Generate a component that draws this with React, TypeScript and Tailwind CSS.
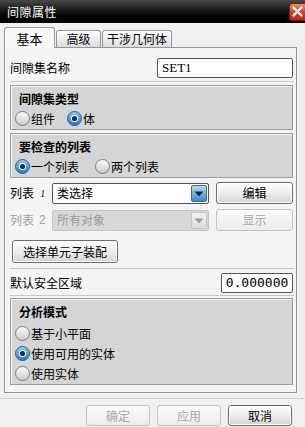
import React from 'react';

const Radio = ({ checked }: { checked?: boolean }) => (
  <svg width="15" height="15" viewBox="0 0 15 15" className="shrink-0">
    <defs>
      <linearGradient id="ru" x1="0" y1="0" x2="0" y2="1">
        <stop offset="0" stopColor="#ffffff" />
        <stop offset="1" stopColor="#c8c8c8" />
      </linearGradient>
      <linearGradient id="rc" x1="0" y1="0" x2="0" y2="1">
        <stop offset="0" stopColor="#8fd0f5" />
        <stop offset="1" stopColor="#1f78c4" />
      </linearGradient>
    </defs>
    {checked ? (
      <>
        <circle cx="7.5" cy="7.5" r="7" fill="url(#rc)" stroke="#2a5f8f" strokeWidth="1" />
        <circle cx="7.5" cy="7.5" r="3.6" fill="#ffffff" />
        <circle cx="7.5" cy="7.5" r="2.6" fill="#1b2f52" />
      </>
    ) : (
      <circle cx="7.5" cy="7.5" r="7" fill="url(#ru)" stroke="#7a7a7a" strokeWidth="1" />
    )}
  </svg>
);

const Group = ({ title, children, className }: { title: string; children: React.ReactNode; className?: string }) => (
  <div className={`border border-[#9c9c9c] bg-[#d5d5d5] shadow-[inset_1px_1px_0_#f4f4f4] px-[4px] ${className ?? ''}`}>
    <div className="pl-[4px] font-bold text-[12px] leading-[14px] text-black">{title}</div>
    {children}
  </div>
);

const Btn = ({ label, disabled, className }: { label: string; disabled?: boolean; className?: string }) => (
  <div
    className={`flex items-center justify-center rounded-[3px] border text-[12px] leading-none ${
      disabled
        ? 'border-[#c2c2c2] bg-gradient-to-b from-[#fbfbfb] to-[#ececec] text-[#a8a8a8]'
        : 'border-[#6e6e6e] bg-gradient-to-b from-[#fdfdfd] via-[#eeeeee] to-[#d4d4d4] text-black shadow-[inset_0_0_0_1px_#ffffff]'
    } ${className ?? ''}`}
  >
    {label}
  </div>
);

const Arrow = ({ disabled }: { disabled?: boolean }) => (
  <svg width="16" height="17" viewBox="0 0 16 17" className="shrink-0">
    <defs>
      <linearGradient id="ab" x1="0" y1="0" x2="0" y2="1">
        <stop offset="0" stopColor="#b9dcf6" />
        <stop offset="1" stopColor="#3d86c8" />
      </linearGradient>
      <linearGradient id="ag" x1="0" y1="0" x2="0" y2="1">
        <stop offset="0" stopColor="#f4f4f4" />
        <stop offset="1" stopColor="#d9d9d9" />
      </linearGradient>
    </defs>
    <rect x="0.5" y="0.5" width="15" height="16" rx="1.5" fill={disabled ? 'url(#ag)' : 'url(#ab)'} stroke={disabled ? '#c4c4c4' : '#3a6c9a'} />
    <path d="M3.5 6.5 L12.5 6.5 L8 11.5 Z" fill={disabled ? '#9a9a9a' : '#1a2a44'} />
  </svg>
);

const RadioItem = ({ checked, label, className }: { checked?: boolean; label: string; className?: string }) => (
  <div className={`flex items-center h-[15px] ${className ?? ''}`}>
    <Radio checked={checked} />
    <span className="ml-[1px] leading-none">{label}</span>
  </div>
);

export default function App() {
  return (
    <div
      className="w-[305px] h-[427px] overflow-hidden bg-[#f0f0f0] flex flex-col text-[12px] text-black"
      style={{ fontFamily: '"Noto Sans CJK SC", "Liberation Sans", sans-serif' }}
    >
      {/* title bar */}
      <div className="h-[23px] shrink-0 flex items-center justify-between bg-gradient-to-b from-[#4a4a4a] via-[#141414] to-[#000000] pl-[7px]">
        <span className="text-white text-[12px] leading-none tracking-[0.5px]">间隙属性</span>
        <div className="w-[17px] h-[18px] mr-[-1px] rounded-l-[3px] border border-[#7a1a10] bg-gradient-to-b from-[#f08a6a] via-[#d8402a] to-[#b82a18] flex items-center justify-center">
          <svg width="11" height="11" viewBox="0 0 11 11">
            <path d="M1.5 1.5 L9.5 9.5 M9.5 1.5 L1.5 9.5" stroke="#ffffff" strokeWidth="2.2" strokeLinecap="round" />
          </svg>
        </div>
      </div>

      {/* tabs */}
      <div className="pl-[4px] pr-[8px] mt-[3px]">
        <div className="flex items-end h-[21px] relative z-10">
          <div className="w-[51px] h-[21px] mb-[-1px] rounded-t-[3px] border border-b-0 border-[#8f9aa0] bg-[#f8f8f8] flex items-center justify-center text-[13px] pt-[1px]">
            基本
          </div>
          <div className="w-[45px] h-[17px] ml-[1px] rounded-t-[3px] border border-b-0 border-[#8f9aa0] bg-gradient-to-b from-[#ffffff] to-[#dcdcdc] flex items-center justify-center text-[12px]">
            高级
          </div>
          <div className="w-[70px] h-[17px] ml-[1px] rounded-t-[3px] border border-b-0 border-[#8f9aa0] bg-gradient-to-b from-[#ffffff] to-[#dcdcdc] flex items-center justify-center text-[12px]">
            干涉几何体
          </div>
        </div>
        <div className="h-[346px] border border-[#8f9aa0] bg-[#f4f4f4] pl-[5px] pr-[3px] flex flex-col">
          {/* name row */}
          <div className="mt-[10px] h-[20px] flex items-center justify-between">
            <span>间隙集名称</span>
            <div className="w-[136px] h-[20px] rounded-[2px] border border-[#555555] bg-white flex items-center pl-[4px] text-[13px]" style={{ fontFamily: '"Liberation Serif", serif' }}>
              SET1
            </div>
          </div>
          <div className="mt-[3px] h-[2px] border-t border-[#c8c8c8] border-b-white mr-[-1px]" />

          <Group title="间隙集类型" className="mt-[2px] h-[45px] pt-[6px]">
            <div className="flex items-center mt-[5px]">
              <RadioItem label="组件" />
              <RadioItem checked label="体" className="ml-[12px]" />
            </div>
          </Group>

          <Group title="要检查的列表" className="mt-[3px] h-[45px] pt-[6px]">
            <div className="flex items-center mt-[5px]">
              <RadioItem checked label="一个列表" />
              <RadioItem label="两个列表" className="ml-[16px]" />
            </div>
          </Group>

          {/* list 1 */}
          <div className="mt-[4px] h-[22px] flex items-center">
            <span className="w-[42px] flex items-center">
              列表
              <span className="ml-[6px] italic text-[11px] text-[#222]" style={{ fontFamily: '"Liberation Serif", serif' }}>1</span>
            </span>
            <div className="w-[157px] h-[21px] rounded-[2px] border border-[#555555] bg-white flex items-center justify-between pl-[4px] pr-[1px]">
              <span>类选择</span>
              <Arrow />
            </div>
            <Btn label="编辑" className="ml-[7px] w-[77px] h-[22px]" />
          </div>

          {/* list 2 */}
          <div className="mt-[5px] h-[22px] flex items-center text-[#a0a0a0]">
            <span className="w-[42px] flex items-center">
              列表
              <span className="ml-[5px] text-[12px]" style={{ fontFamily: '"Liberation Sans", sans-serif' }}>2</span>
            </span>
            <div className="w-[157px] h-[21px] rounded-[2px] border border-[#c4c4c4] bg-[#d8d8d8] flex items-center justify-between pl-[4px] pr-[1px]">
              <span className="text-[#9a9a9a]">所有对象</span>
              <Arrow disabled />
            </div>
            <Btn label="显示" disabled className="ml-[7px] w-[77px] h-[22px]" />
          </div>

          <Btn label="选择单元子装配" className="mt-[9px] ml-[2px] w-[106px] h-[23px] self-start" />

          <div className="mt-[5px] h-[2px] border-t border-[#c8c8c8] border-b-white mr-[-1px]" />

          <div className="mt-[2px] h-[21px] flex items-center justify-between">
            <span>默认安全区域</span>
            <div className="w-[72px] h-[20px] rounded-[2px] border border-[#555555] bg-white flex items-center justify-center text-[13px]" style={{ fontFamily: '"DejaVu Sans Mono", monospace' }}>
              0.000000
            </div>
          </div>

          <div className="mt-[2px] h-[2px] border-t border-[#c8c8c8] border-b-white mr-[-1px]" />

          <Group title="分析模式" className="mt-[1px] h-[87px] pt-[6px]">
            <div className="flex flex-col gap-[5px] mt-[7px]">
              <RadioItem label="基于小平面" />
              <RadioItem checked label="使用可用的实体" />
              <RadioItem label="使用实体" />
            </div>
          </Group>
        </div>
      </div>

      <div className="mt-[5px] h-[2px] border-t border-[#cfcfcf] border-b-white" />

      {/* footer */}
      <div className="mt-[5px] flex justify-end pr-[13px] gap-[7px]">
        <Btn label="确定" disabled className="w-[64px] h-[21px]" />
        <Btn label="应用" disabled className="w-[64px] h-[21px]" />
        <Btn label="取消" className="w-[64px] h-[21px]" />
      </div>
    </div>
  );
}
